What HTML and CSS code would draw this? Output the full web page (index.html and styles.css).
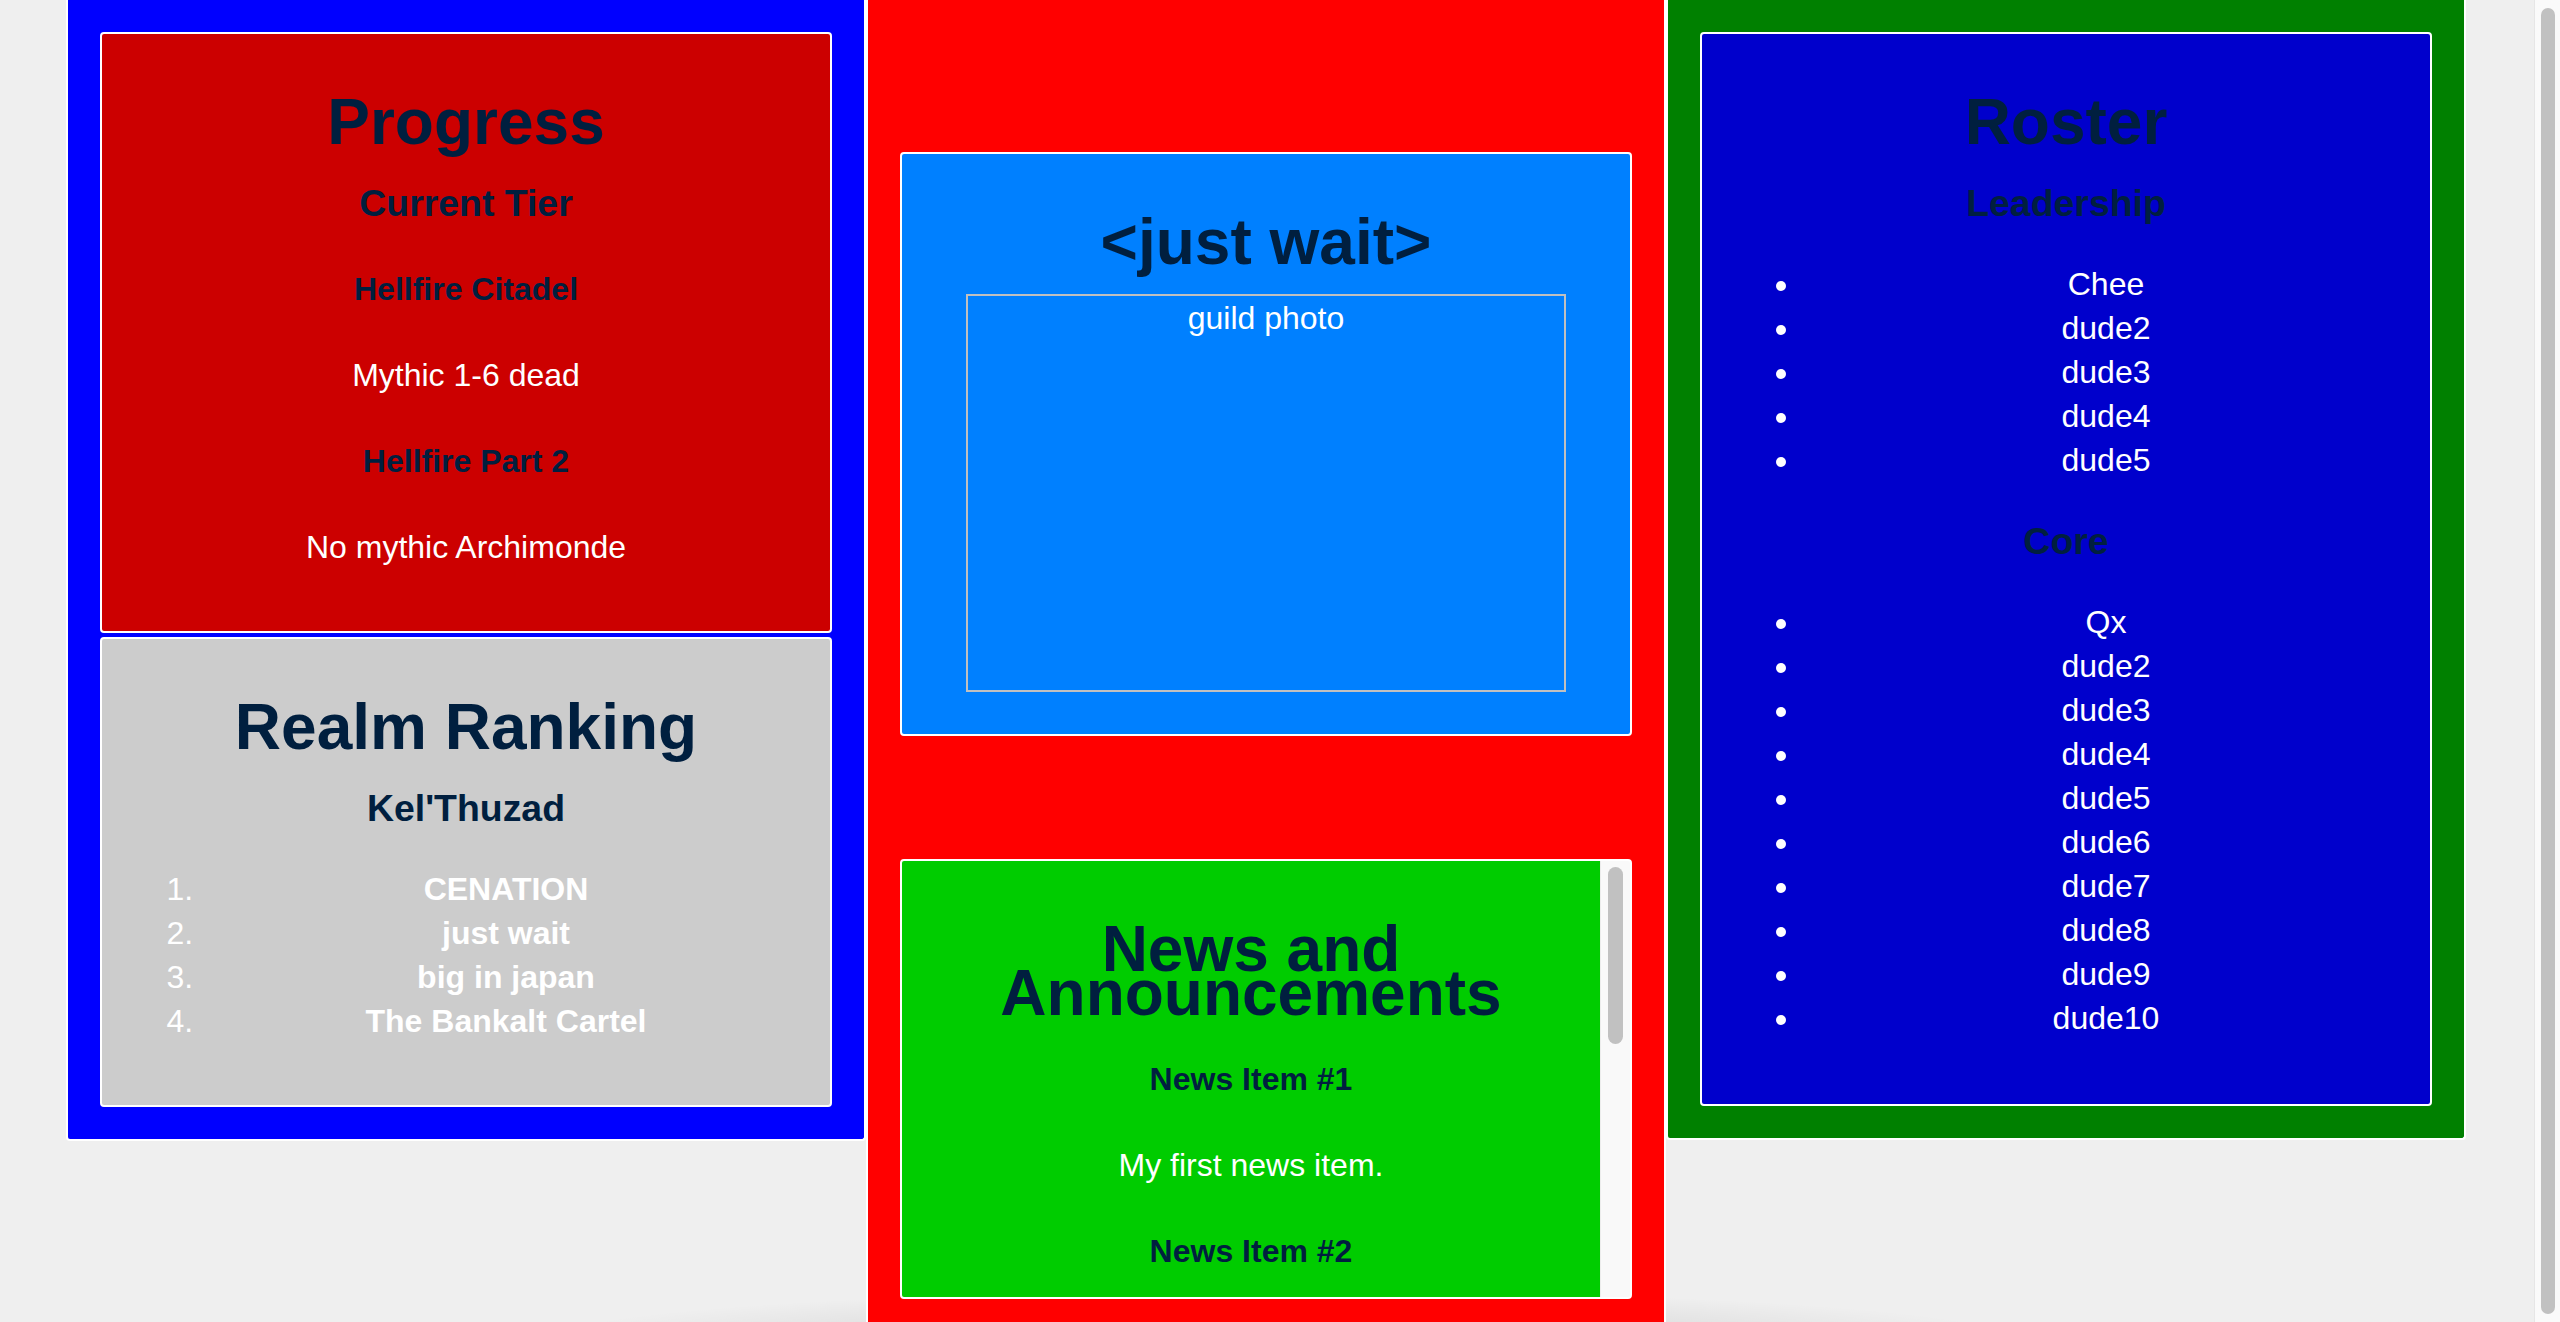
FILE: index.html
```html
<!DOCTYPE html>
<html lang="en">
<head>
    <meta charset="UTF-8">
    <title>just wait</title>
    <link rel="stylesheet" href="styles.css">
</head>
<body>

<div class="wrap">

    <!-- left column: progress + ranking -->
    <div class="col col_blue">
        <div class="box box_progress">
            <h1>Progress</h1>
            <h3>Current Tier</h3>
            <h4>Hellfire Citadel</h4>
            <p>Mythic 1-6 dead</p>
            <h4>Hellfire Part 2</h4>
            <p>No mythic Archimonde</p>
        </div>
        <div class="box box_ranking">
            <h1>Realm Ranking</h1>
            <h3>Kel'Thuzad</h3>
            <ol>
                <li>CENATION</li>
                <li>just wait</li>
                <li>big in japan</li>
                <li>The Bankalt Cartel</li>
            </ol>
        </div>
    </div>

    <!-- middle column: guild + news -->
    <div class="col col_red">
        <div class="box box_guild">
            <h1>&lt;just wait&gt;</h1>
            <div class="photo">guild photo</div>
        </div>
        <div class="box box_news">
            <div class="news_body">
                <h1>News and Announcements</h1>
                <h4>News Item #1</h4>
                <p>My first news item.</p>
                <h4>News Item #2</h4>
            </div>
            <!-- scrollbar of the news box -->
            <div class="news_bar"><div class="news_thumb"></div></div>
        </div>
    </div>

    <!-- right column: roster -->
    <div class="col col_green">
        <div class="box box_roster">
            <h1>Roster</h1>
            <h3>Leadership</h3>
            <ul>
                <li>Chee</li>
                <li>dude2</li>
                <li>dude3</li>
                <li>dude4</li>
                <li>dude5</li>
            </ul>
            <h3>Core</h3>
            <ul>
                <li>Qx</li>
                <li>dude2</li>
                <li>dude3</li>
                <li>dude4</li>
                <li>dude5</li>
                <li>dude6</li>
                <li>dude7</li>
                <li>dude8</li>
                <li>dude9</li>
                <li>dude10</li>
            </ul>
        </div>
    </div>

</div>

<!-- page scrollbar -->
<div class="page_bar"><div class="page_thumb"></div></div>

</body>
</html>
```

FILE: styles.css
```css
html {
    overflow: hidden;
    background: radial-gradient(ellipse 740px 50px at 1282px 1340px, rgba(0, 0, 0, 0.14), rgba(0, 0, 0, 0)) no-repeat, #efefef;
}

body {
    margin: 0;
    font-family: "Liberation Sans", Arial, sans-serif;
    font-size: 32px;
    line-height: 44px;
    color: #fff;
    text-align: center;
}

.wrap {
    display: flex;
    align-items: flex-start;
    width: 2400px;
    margin-left: 66px;
}

.col {
    width: 800px;
    box-sizing: border-box;
    border: 2px solid #fff;
    border-top: 0;
    border-radius: 0 0 4px 4px;
    padding: 32px;
}

.col_blue {
    background-color: #0000ff;
}

.col_red {
    background-color: #ff0000;
    padding-bottom: 150px;
}

.col_green {
    background-color: #008000;
}

.box {
    border: 2px solid #fff;
    border-radius: 4px;
    padding: 23px 20px 30px;
}

.box_progress {
    background-color: #cc0000;
    margin-bottom: 4px;
}

.box_ranking {
    background-color: #cccccc;
}

.box_guild {
    background-color: #0080ff;
    margin-top: 120px;
    padding-bottom: 42px;
}

.box_guild h1 {
    margin-bottom: 30px;
}

.box_news {
    display: flex;
    margin-top: 123px;
    height: 440px;
    padding: 0;
    box-sizing: border-box;
    overflow: hidden;
    background-color: #f9f9f9;
}

.news_body {
    flex: 1;
    min-width: 0;
    padding: 23px 20px 0;
    overflow: hidden;
    background-color: #00cc00;
}

.news_bar {
    width: 30px;
    box-sizing: border-box;
    padding: 6px 7px;
    border-left: 1px solid #ececec;
    background-color: #f9f9f9;
}

.news_thumb {
    height: 177px;
    border-radius: 8px;
    background-color: #c1c1c1;
}

.box_roster {
    background-color: #0000cc;
}

.box_roster ul {
    margin-bottom: 34px;
}

h1, h3, h4 {
    color: #001f3f;
    font-weight: bold;
}

h1 {
    font-size: 64px;
    margin: 43px 0 37px;
}

h3 {
    font-size: 37.44px;
    margin: 37px 0;
}

h4 {
    font-size: 32px;
    margin: 42px 0;
}

p {
    margin: 32px 0;
}

ol, ul {
    margin: 37px 0 32px;
    padding-left: 80px;
}

.box_ranking li {
    font-weight: bold;
}

.box_ranking li::marker {
    font-weight: normal;
}

.photo {
    width: 600px;
    height: 398px;
    box-sizing: border-box;
    margin: 0 auto;
    border: 2px solid #c0c0c0;
}

.page_bar {
    position: fixed;
    top: 0;
    right: 0;
    bottom: 0;
    width: 26px;
    box-sizing: border-box;
    padding: 8px 5px 8px 6px;
    border-left: 1px solid #e6e6e6;
    background-color: #fafafa;
}

.page_thumb {
    height: 100%;
    border-radius: 8px;
    background-color: #c1c1c1;
}
```
